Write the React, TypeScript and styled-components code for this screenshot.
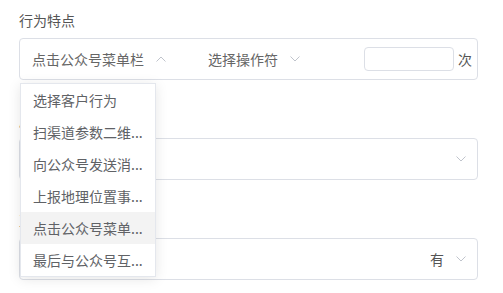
import React from "react";
import styled, { createGlobalStyle } from "styled-components";

const Global = createGlobalStyle`
  html, body { margin: 0; padding: 0; background: #fff; }
  body { font-family: "Noto Sans CJK SC", "Noto Sans", sans-serif; }
`;

const Page = styled.div`
  position: relative;
  width: 503px;
  height: 293px;
  overflow: hidden;
  padding: 10px 25px 0 19px;
  box-sizing: border-box;
  display: flex;
  flex-direction: column;
  gap: 30px;
`;

const Section = styled.div`
  display: flex;
  flex-direction: column;
  gap: 8px;
`;

const Label = styled.div`
  font-size: 14px;
  line-height: 20px;
  height: 20px;
  color: #555;
`;

const Box = styled.div`
  height: 42px;
  box-sizing: border-box;
  border: 1px solid #dcdfe6;
  border-radius: 4px;
  display: flex;
  align-items: center;
  padding: 0 11px 0 12px;
  background: #fff;
`;

const Sel = styled.div<{ $w: number }>`
  width: ${(p) => p.$w}px;
  flex: none;
  display: flex;
  align-items: center;
  font-size: 14px;
  color: #666;
  line-height: 20px;
`;

const Chev = styled.svg`
  margin-left: 12px;
  flex: none;
`;

const Input = styled.div`
  width: 90px;
  height: 24px;
  box-sizing: border-box;
  border: 1px solid #dcdfe6;
  border-radius: 4px;
  flex: none;
`;

const Unit = styled.span`
  margin-left: 4px;
  font-size: 14px;
  color: #555;
`;

const Spacer = styled.div`
  flex: 1;
`;

const Value = styled.span`
  font-size: 14px;
  color: #555;
`;

const Menu = styled.ul`
  position: absolute;
  left: 20px;
  top: 83px;
  width: 136px;
  margin: 0;
  padding: 0;
  list-style: none;
  background: #fff;
  border: 1px solid #e4e7ed;
  box-shadow: 0 2px 12px rgba(0, 0, 0, 0.1);
  box-sizing: border-box;
`;

const Item = styled.li<{ $active?: boolean }>`
  height: 32px;
  line-height: 32px;
  padding: 0 12px;
  font-size: 14px;
  color: #606266;
  white-space: nowrap;
  overflow: hidden;
  background: ${(p) => (p.$active ? "#f3f3f3" : "#fff")};
`;

const Chevron = ({ up }: { up?: boolean }) => (
  <Chev width="10" height="6" viewBox="0 0 10 6">
    <polyline
      points={up ? "0.5,5.5 5,1 9.5,5.5" : "0.5,0.5 5,5 9.5,0.5"}
      fill="none"
      stroke="#c0c4cc"
      strokeWidth="1"
    />
  </Chev>
);

const items = [
  "选择客户行为",
  "扫渠道参数二维...",
  "向公众号发送消...",
  "上报地理位置事...",
  "点击公众号菜单...",
  "最后与公众号互...",
];

export default function App() {
  return (
    <>
      <Global />
      <Page>
        <Section>
          <Label>行为特点</Label>
          <Box>
            <Sel $w={176}>
              点击公众号菜单栏
              <Chevron up />
            </Sel>
            <Sel $w={156}>
              选择操作符
              <Chevron />
            </Sel>
            <Input />
            <Unit>次</Unit>
          </Box>
        </Section>
        <Section>
          <Label>属性特点</Label>
          <Box>
            <Spacer />
            <Chevron />
          </Box>
        </Section>
        <Section>
          <Label>互动情况</Label>
          <Box>
            <Spacer />
            <Value>有</Value>
            <Chevron />
          </Box>
        </Section>
        <Menu>
          {items.map((t, i) => (
            <Item key={t} $active={i === 4}>
              {t}
            </Item>
          ))}
        </Menu>
      </Page>
    </>
  );
}
